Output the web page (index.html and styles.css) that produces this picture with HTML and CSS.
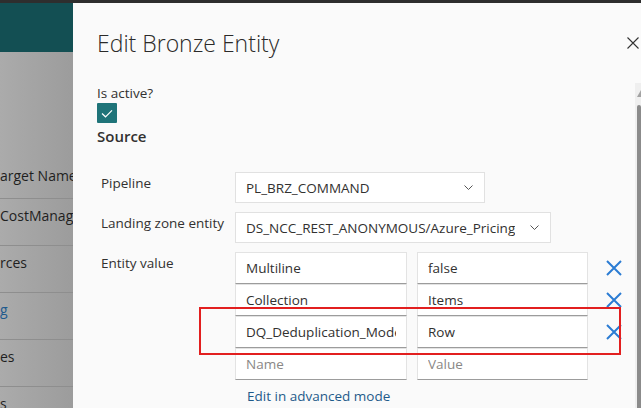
FILE: index.html
```html
<!DOCTYPE html>
<html lang="en">
<head>
    <meta charset="UTF-8">
    <title>Edit Bronze Entity</title>
    <link rel="stylesheet" href="styles.css">
</head>
<body>
    <div class="topbar"></div>
    <div class="stage">
        <!-- Page behind the panel -->
        <div class="backdrop">
            <div class="bd-head"></div>
            <div class="bd-table">
                <div class="bd-row bd-th">arget Name</div>
                <div class="bd-row">CostManage</div>
                <div class="bd-row">rces</div>
                <div class="bd-row bd-link">g</div>
                <div class="bd-row">es</div>
                <div class="bd-row">s</div>
            </div>
        </div>

        <!-- Edit panel -->
        <div class="panel">
            <div class="panel-head">
                <h1>Edit Bronze Entity</h1>
                <button class="close" aria-label="Close">
                    <svg width="12" height="12" viewBox="0 0 12 12"><path d="M0.5 0.5L11.5 11.5M11.5 0.5L0.5 11.5" stroke="#333" stroke-width="1.1" fill="none"/></svg>
                </button>
            </div>
            <div class="panel-body">
                <div class="content">
                    <div class="field-label">Is active?</div>
                    <span class="checkbox">
                        <svg width="20" height="20" viewBox="0 0 20 20"><path d="M5 10.5L8.5 13.8L15 7.3" stroke="#fff" stroke-width="1.2" fill="none"/></svg>
                    </span>
                    <h2>Source</h2>

                    <div class="form">
                        <div class="form-row">
                            <label>Pipeline</label>
                            <div class="select select-pipeline">
                                <span>PL_BRZ_COMMAND</span>
                                <svg class="chevron" width="9" height="5" viewBox="0 0 9 5"><path d="M0.5 0.5L4.5 4.5L8.5 0.5" stroke="#555" fill="none"/></svg>
                            </div>
                        </div>
                        <div class="form-row">
                            <label>Landing zone entity</label>
                            <div class="select select-landing">
                                <span>DS_NCC_REST_ANONYMOUS/Azure_Pricing</span>
                                <svg class="chevron" width="9" height="5" viewBox="0 0 9 5"><path d="M0.5 0.5L4.5 4.5L8.5 0.5" stroke="#555" fill="none"/></svg>
                            </div>
                        </div>
                        <div class="form-row">
                            <label>Entity value</label>
                            <div class="kv">
                                <div class="kv-row">
                                    <input class="key" value="Multiline">
                                    <input class="value" value="false">
                                    <button class="remove" aria-label="Remove"><svg width="16" height="16" viewBox="0 0 16 16"><path d="M1 1L15 15M15 1L1 15" stroke="#2b7cd3" stroke-width="2" fill="none"/></svg></button>
                                </div>
                                <div class="kv-row">
                                    <input class="key" value="Collection">
                                    <input class="value" value="Items">
                                    <button class="remove" aria-label="Remove"><svg width="16" height="16" viewBox="0 0 16 16"><path d="M1 1L15 15M15 1L1 15" stroke="#2b7cd3" stroke-width="2" fill="none"/></svg></button>
                                </div>
                                <div class="kv-row">
                                    <input class="key" value="DQ_Deduplication_Mode">
                                    <input class="value" value="Row">
                                    <button class="remove" aria-label="Remove"><svg width="16" height="16" viewBox="0 0 16 16"><path d="M1 1L15 15M15 1L1 15" stroke="#2b7cd3" stroke-width="2" fill="none"/></svg></button>
                                </div>
                                <div class="kv-row">
                                    <input class="key" placeholder="Name">
                                    <input class="value" placeholder="Value">
                                </div>
                                <a class="link" href="#">Edit in advanced mode</a>
                            </div>
                        </div>
                    </div>
                </div>
                <div class="scrollbar">
                    <span class="sb-arrow"></span>
                    <span class="sb-thumb"></span>
                </div>
            </div>
        </div>
    </div>

    <!-- Annotation box -->
    <div class="highlight"></div>
</body>
</html>
```

FILE: styles.css
```css
body {
    margin: 0;
    width: 641px;
    height: 408px;
    overflow: hidden;
    position: relative;
    background: #fafafa;
    font-family: "Open Sans", "Noto Sans", sans-serif;
    color: #323130;
}

.topbar {
    height: 3px;
    background: #2e2e2e;
}

.stage {
    display: flex;
    height: 405px;
}

/* Backdrop */
.backdrop {
    flex: 0 0 73px;
    overflow: hidden;
    background: linear-gradient(to right, #ababab, #9c9c9c);
}

.bd-head {
    height: 49px;
    background: #134f53;
}

.bd-table {
    padding-top: 100px;
}

.bd-row {
    height: 47px;
    box-sizing: border-box;
    border-bottom: 1px solid #8e8e8e;
    padding-top: 7px;
    font-size: 14px;
    line-height: 20px;
    white-space: nowrap;
    color: #1f1f1f;
}

.bd-th {
    padding-top: 14px;
}

.bd-link {
    color: #1f5a8e;
}

/* Panel */
.panel {
    flex: 1;
    background: #fafafa;
    padding: 25px 0 0 24px;
}

.panel-head {
    display: flex;
    align-items: center;
    justify-content: space-between;
}

h1 {
    margin: 0;
    font-size: 23px;
    line-height: 30px;
    font-weight: 300;
    color: #2b2a29;
}

.close {
    display: flex;
    width: 12px;
    height: 12px;
    padding: 0;
    margin-right: 2px;
    border: none;
    background: none;
}

.panel-body {
    display: flex;
    margin-top: 25px;
}

.content {
    flex: 1;
}

.field-label {
    font-size: 13.5px;
    line-height: 20px;
}

.checkbox {
    display: flex;
    width: 20px;
    height: 20px;
    background: #1f7479;
    border-radius: 1px;
}

h2 {
    margin: 2px 0 0;
    font-size: 15px;
    line-height: 22px;
    font-weight: 600;
}

.form {
    margin-top: 25px;
    display: flex;
    flex-direction: column;
    gap: 9px;
}

.form-row {
    display: flex;
    align-items: flex-start;
}

.form-row label {
    flex: 0 0 138px;
    box-sizing: border-box;
    padding: 1px 0 0 4px;
    font-size: 13.5px;
    line-height: 20px;
}

.select {
    display: flex;
    align-items: center;
    justify-content: space-between;
    height: 31px;
    box-sizing: border-box;
    padding: 0 11px 0 10px;
    border: 1px solid #e1e1e1;
    background: #fff;
    font-size: 13.5px;
    white-space: nowrap;
}

.select span {
    overflow: hidden;
}

.select-pipeline {
    width: 250px;
}

.select-landing {
    width: 316px;
}

.chevron {
    flex: none;
    margin-left: 12px;
}

/* Key / value list */
.kv {
    display: flex;
    flex-direction: column;
}

.kv-row {
    display: flex;
    align-items: center;
}

.kv input {
    width: 172px;
    height: 32px;
    box-sizing: border-box;
    margin: 0;
    padding: 0 10px;
    border: 1px solid #e3e3e3;
    border-bottom-color: #9c9c9c;
    background: #fff;
    font: 13.5px "Open Sans", "Noto Sans", sans-serif;
    color: #323130;
    outline: none;
}

.kv input::placeholder {
    color: #8a8886;
}

.kv .value {
    width: 171px;
    margin-left: 10px;
}

.remove {
    display: flex;
    width: 16px;
    height: 16px;
    margin-left: 18px;
    padding: 0;
    border: none;
    background: none;
}

.link {
    margin: 6px 0 0 12px;
    font-size: 13.5px;
    line-height: 20px;
    color: #1f5a8a;
    text-decoration: none;
}

/* Scrollbar */
.scrollbar {
    flex: 0 0 6px;
    height: 325px;
    background: #efefef;
    display: flex;
    flex-direction: column;
    align-items: flex-end;
}

.sb-arrow {
    margin-top: 7px;
    width: 0;
    height: 0;
    border-left: 4px solid transparent;
    border-bottom: 7px solid #a3a3a3;
}

.sb-thumb {
    flex: 1;
    width: 4px;
    margin-top: 8px;
    background: #8b8b8b;
    border-radius: 2px 2px 0 0;
}

/* Red review marker */
.highlight {
    position: absolute;
    left: 199px;
    top: 307px;
    width: 422px;
    height: 48px;
    box-sizing: border-box;
    border: 2px solid #e21f1f;
}
```
